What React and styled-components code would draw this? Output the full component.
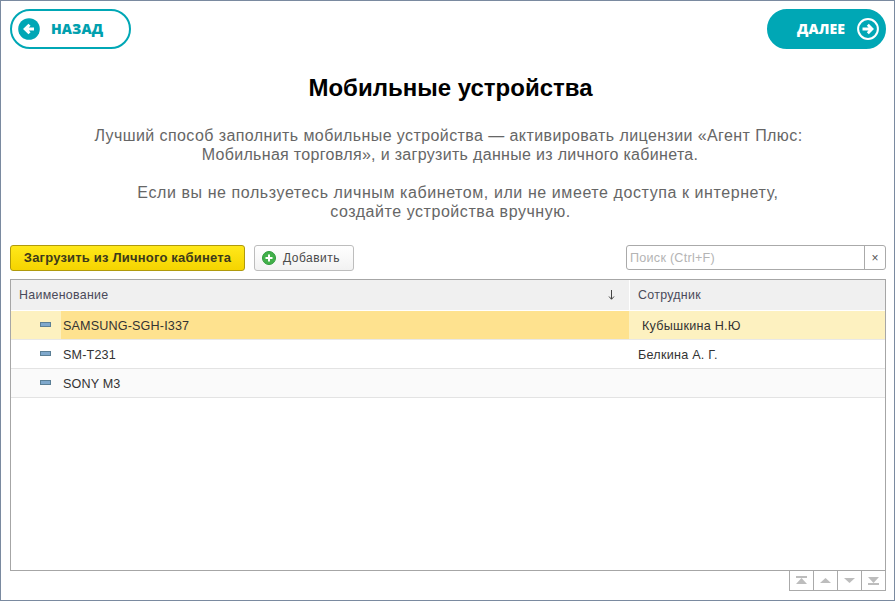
import React from "react";
import styled, { createGlobalStyle } from "styled-components";

const Global = createGlobalStyle`
  html, body { margin: 0; padding: 0; background: #fff; }
  body { font-family: "Liberation Sans", Arial, sans-serif; }
`;

const Frame = styled.div`
  width: 895px; height: 601px; box-sizing: border-box;
  border: 1px solid #7a8aa0;
  padding: 8px 8px 9px 9px;
  display: flex; flex-direction: column; background: #fff;
`;
const NavBar = styled.div`
  display: flex; justify-content: space-between; height: 40px; flex: none;
`;
const NavButton = styled.div`
  box-sizing: border-box; width: ${p => p.$w}px; height: 40px; border-radius: 20px;
  border: 2px solid #00a7b5; background: ${p => p.$filled ? "#00a7b5" : "#fff"};
  color: ${p => p.$filled ? "#fff" : "#00a0ae"};
  display: flex; align-items: center; gap: ${p => p.$gap}px;
  padding: ${p => p.$filled ? "0 0 0 28px" : "0 0 0 6px"};
  font: 800 14px "Open Sans", sans-serif; letter-spacing: 0.1px;
`;
const NavLabel = styled.span`
  margin-bottom: 2px;
`;
const Title = styled.h1`
  margin: 21px 0 0; padding-left: 5px;
  font: bold 24px/36px "Liberation Sans", sans-serif; color: #000; text-align: center;
`;
const Intro = styled.div`
  margin-top: 20px; font-size: 16px; line-height: 19px; color: #666; text-align: center;
`;
const IntroPara = styled.p`
  margin: 0 0 19px;
  &:last-child { margin-bottom: 0; }
`;
const IntroLine = styled.span`
  display: block; padding-left: ${p => p.$shift}px; letter-spacing: ${p => p.$spacing}px;
`;
const Toolbar = styled.div`
  margin-top: 23px; height: 27px; display: flex; align-items: center; gap: 9px; flex: none;
`;
const YellowButton = styled.button`
  box-sizing: border-box; width: 235px; height: 26px; padding: 0; border: 1px solid #b09a0c; border-radius: 3px;
  background: linear-gradient(#ffe81a, #f5d400); color: #3d3a1a;
  font: bold 13px "Liberation Sans", sans-serif; letter-spacing: 0.2px;
`;
const AddButton = styled.button`
  box-sizing: border-box; width: 100px; height: 26px; padding: 0 0 0 7px; border: 1px solid #bdbdbd; border-radius: 3px;
  background: linear-gradient(#fff, #f2f2f2); color: #4a4a4a;
  display: flex; align-items: center; gap: 7px;
  font: 12px "Liberation Sans", sans-serif; letter-spacing: 0.5px;
`;
const Search = styled.div`
  margin-left: auto; box-sizing: border-box; width: 260px; height: 25px; border: 1px solid #aaa; border-radius: 3px;
  display: flex; align-items: center;
`;
const SearchText = styled.div`
  flex: 1; padding-left: 3px; font-size: 12.6px; color: #b4b4b4; letter-spacing: 0.25px;
`;
const SearchClear = styled.div`
  width: 20px; height: 23px; border-left: 1px solid #aaa; display: flex; align-items: center; justify-content: center;
  font-size: 12px; color: #555;
`;
const Table = styled.div`
  margin-top: 8px; box-sizing: border-box; flex: 1; border: 1px solid #a6a6a6; min-height: 0;
`;
const HeadRow = styled.div`
  display: grid; grid-template-columns: 618px 1fr; height: 30px; background: #f0f0f0; border-bottom: 1px solid #fff; gap: 1px;
`;
const HeadCell = styled.div`
  display: flex; align-items: center; justify-content: space-between; padding: 0 14px 0 8px;
  background: #f0f0f0; font-size: 12.4px; color: #4a4a5a; letter-spacing: 0.3px;
  & + & { box-shadow: -1px 0 0 #fff; }
`;
const Row = styled.div`
  display: grid; grid-template-columns: 618px 1fr; height: 28px; margin-bottom: 1px; gap: 1px;
  box-shadow: 0 1px 0 ${p => p.$selected ? "#e8e8e8" : "#e3e3e3"};
  background: ${p => p.$bg};
`;
const NameCell = styled.div`
  display: flex; align-items: center; padding-left: 29px; height: 28px; font-size: 12.6px; color: #333; letter-spacing: 0.15px;
`;
const NameText = styled.div`
  flex: 1; align-self: stretch; display: flex; align-items: center; padding: 2px 0 0 2px;
  background: ${p => p.$selected ? "#fee28f" : "transparent"};
`;
const Dash = styled.span`
  flex: none; box-sizing: border-box; width: 11px; height: 5px; margin: 0 10px 2px 0;
  background: #7fa8cc; border: 1px solid #5b7f96;
`;
const EmployeeCell = styled.div`
  display: flex; align-items: center; padding: 2px 0 0 ${p => p.$pad}px; font-size: 12.6px; color: #333; letter-spacing: 0.25px;
`;
const Pager = styled.div`
  align-self: flex-end; display: flex; height: 20px; box-sizing: border-box; border: 1px solid #aaa; border-top: none; flex: none;
`;
const PagerButton = styled.div`
  width: 23px; display: flex; align-items: center; justify-content: center;
  & + & { border-left: 1px solid #aaa; }
`;

const PagerIcon = ({ up, bar }) => (
  <svg width="13" height="9" viewBox="0 0 13 9">
    {up
      ? <path d={bar ? "M6.5 2 L12 8 H1 Z" : "M6.5 2 L12 7 H1 Z"} fill="#bdbdbd" />
      : <path d={bar ? "M6.5 7 L12 1 H1 Z" : "M6.5 7 L12 2 H1 Z"} fill="#bdbdbd" />}
    {bar && <rect x="1" y={up ? 0 : 7} width="11" height="2" fill="#bdbdbd" />}
  </svg>
);

const SortIcon = () => (
  <svg width="7" height="10" viewBox="0 0 7 10">
    <path d="M3.5 0V9M1 6.5L3.5 9.3L6 6.5" fill="none" stroke="#444" strokeWidth="1" />
  </svg>
);
const BackIcon = () => (
  <svg width="22" height="22" viewBox="0 0 22 22">
    <circle cx="11" cy="11" r="10.8" fill="#00a7b5" />
    <path d="M16 11H7.5M11.5 6.8L7.2 11L11.5 15.2" fill="none" stroke="#fff" strokeWidth="3" />
  </svg>
);
const NextIcon = () => (
  <svg width="22" height="22" viewBox="0 0 22 22">
    <circle cx="11" cy="11" r="9.9" fill="none" stroke="#fff" strokeWidth="2" />
    <path d="M5.5 11H14.5M10.8 6.8L15 11L10.8 15.2" fill="none" stroke="#fff" strokeWidth="2.8" />
  </svg>
);
const AddIcon = () => (
  <svg width="14" height="14" viewBox="0 0 14 14">
    <circle cx="7" cy="7" r="6.5" fill="#42b04a" stroke="#2f9a3c" />
    <path d="M7 3.5V10.5M3.5 7H10.5" stroke="#fff" strokeWidth="2" />
  </svg>
);

const rows = [
  { name: "SAMSUNG-SGH-I337", employee: "Кубышкина Н.Ю", bg: "#fdf1c0", selected: true, pad: 12 },
  { name: "SM-T231", employee: "Белкина А. Г.", bg: "#fff", pad: 8 },
  { name: "SONY M3", employee: "", bg: "#fafafa", pad: 8 },
];

export default function App() {
  return (
    <Frame>
      <Global />
      <NavBar>
        <NavButton $w={121} $gap={11}><BackIcon /><NavLabel>НАЗАД</NavLabel></NavButton>
        <NavButton $w={119} $gap={12} $filled><NavLabel>ДАЛЕЕ</NavLabel><NextIcon /></NavButton>
      </NavBar>
      <Title>Мобильные устройства</Title>
      <Intro>
        <IntroPara>
          <IntroLine $shift={1} $spacing={0.41}>Лучший способ заполнить мобильные устройства — активировать лицензии «Агент Плюс:</IntroLine>
          <IntroLine $shift={4} $spacing={0.32}>Мобильная торговля», и загрузить данные из личного кабинета.</IntroLine>
        </IntroPara>
        <IntroPara>
          <IntroLine $shift={20} $spacing={0.58}>Если вы не пользуетесь личным кабинетом, или не имеете доступа к интернету,</IntroLine>
          <IntroLine $shift={5} $spacing={0.55}>создайте устройства вручную.</IntroLine>
        </IntroPara>
      </Intro>
      <Toolbar>
        <YellowButton>Загрузить из Личного кабинета</YellowButton>
        <AddButton><AddIcon />Добавить</AddButton>
        <Search><SearchText>Поиск (Ctrl+F)</SearchText><SearchClear>×</SearchClear></Search>
      </Toolbar>
      <Table>
        <HeadRow>
          <HeadCell>Наименование<SortIcon /></HeadCell>
          <HeadCell>Сотрудник</HeadCell>
        </HeadRow>
        {rows.map(r => (
          <Row key={r.name} $bg={r.bg} $selected={r.selected}>
            <NameCell><Dash /><NameText $selected={r.selected}>{r.name}</NameText></NameCell>
            <EmployeeCell $pad={r.pad}>{r.employee}</EmployeeCell>
          </Row>
        ))}
      </Table>
      <Pager>
        <PagerButton><PagerIcon up bar /></PagerButton>
        <PagerButton><PagerIcon up /></PagerButton>
        <PagerButton><PagerIcon /></PagerButton>
        <PagerButton><PagerIcon bar /></PagerButton>
      </Pager>
    </Frame>
  );
}
